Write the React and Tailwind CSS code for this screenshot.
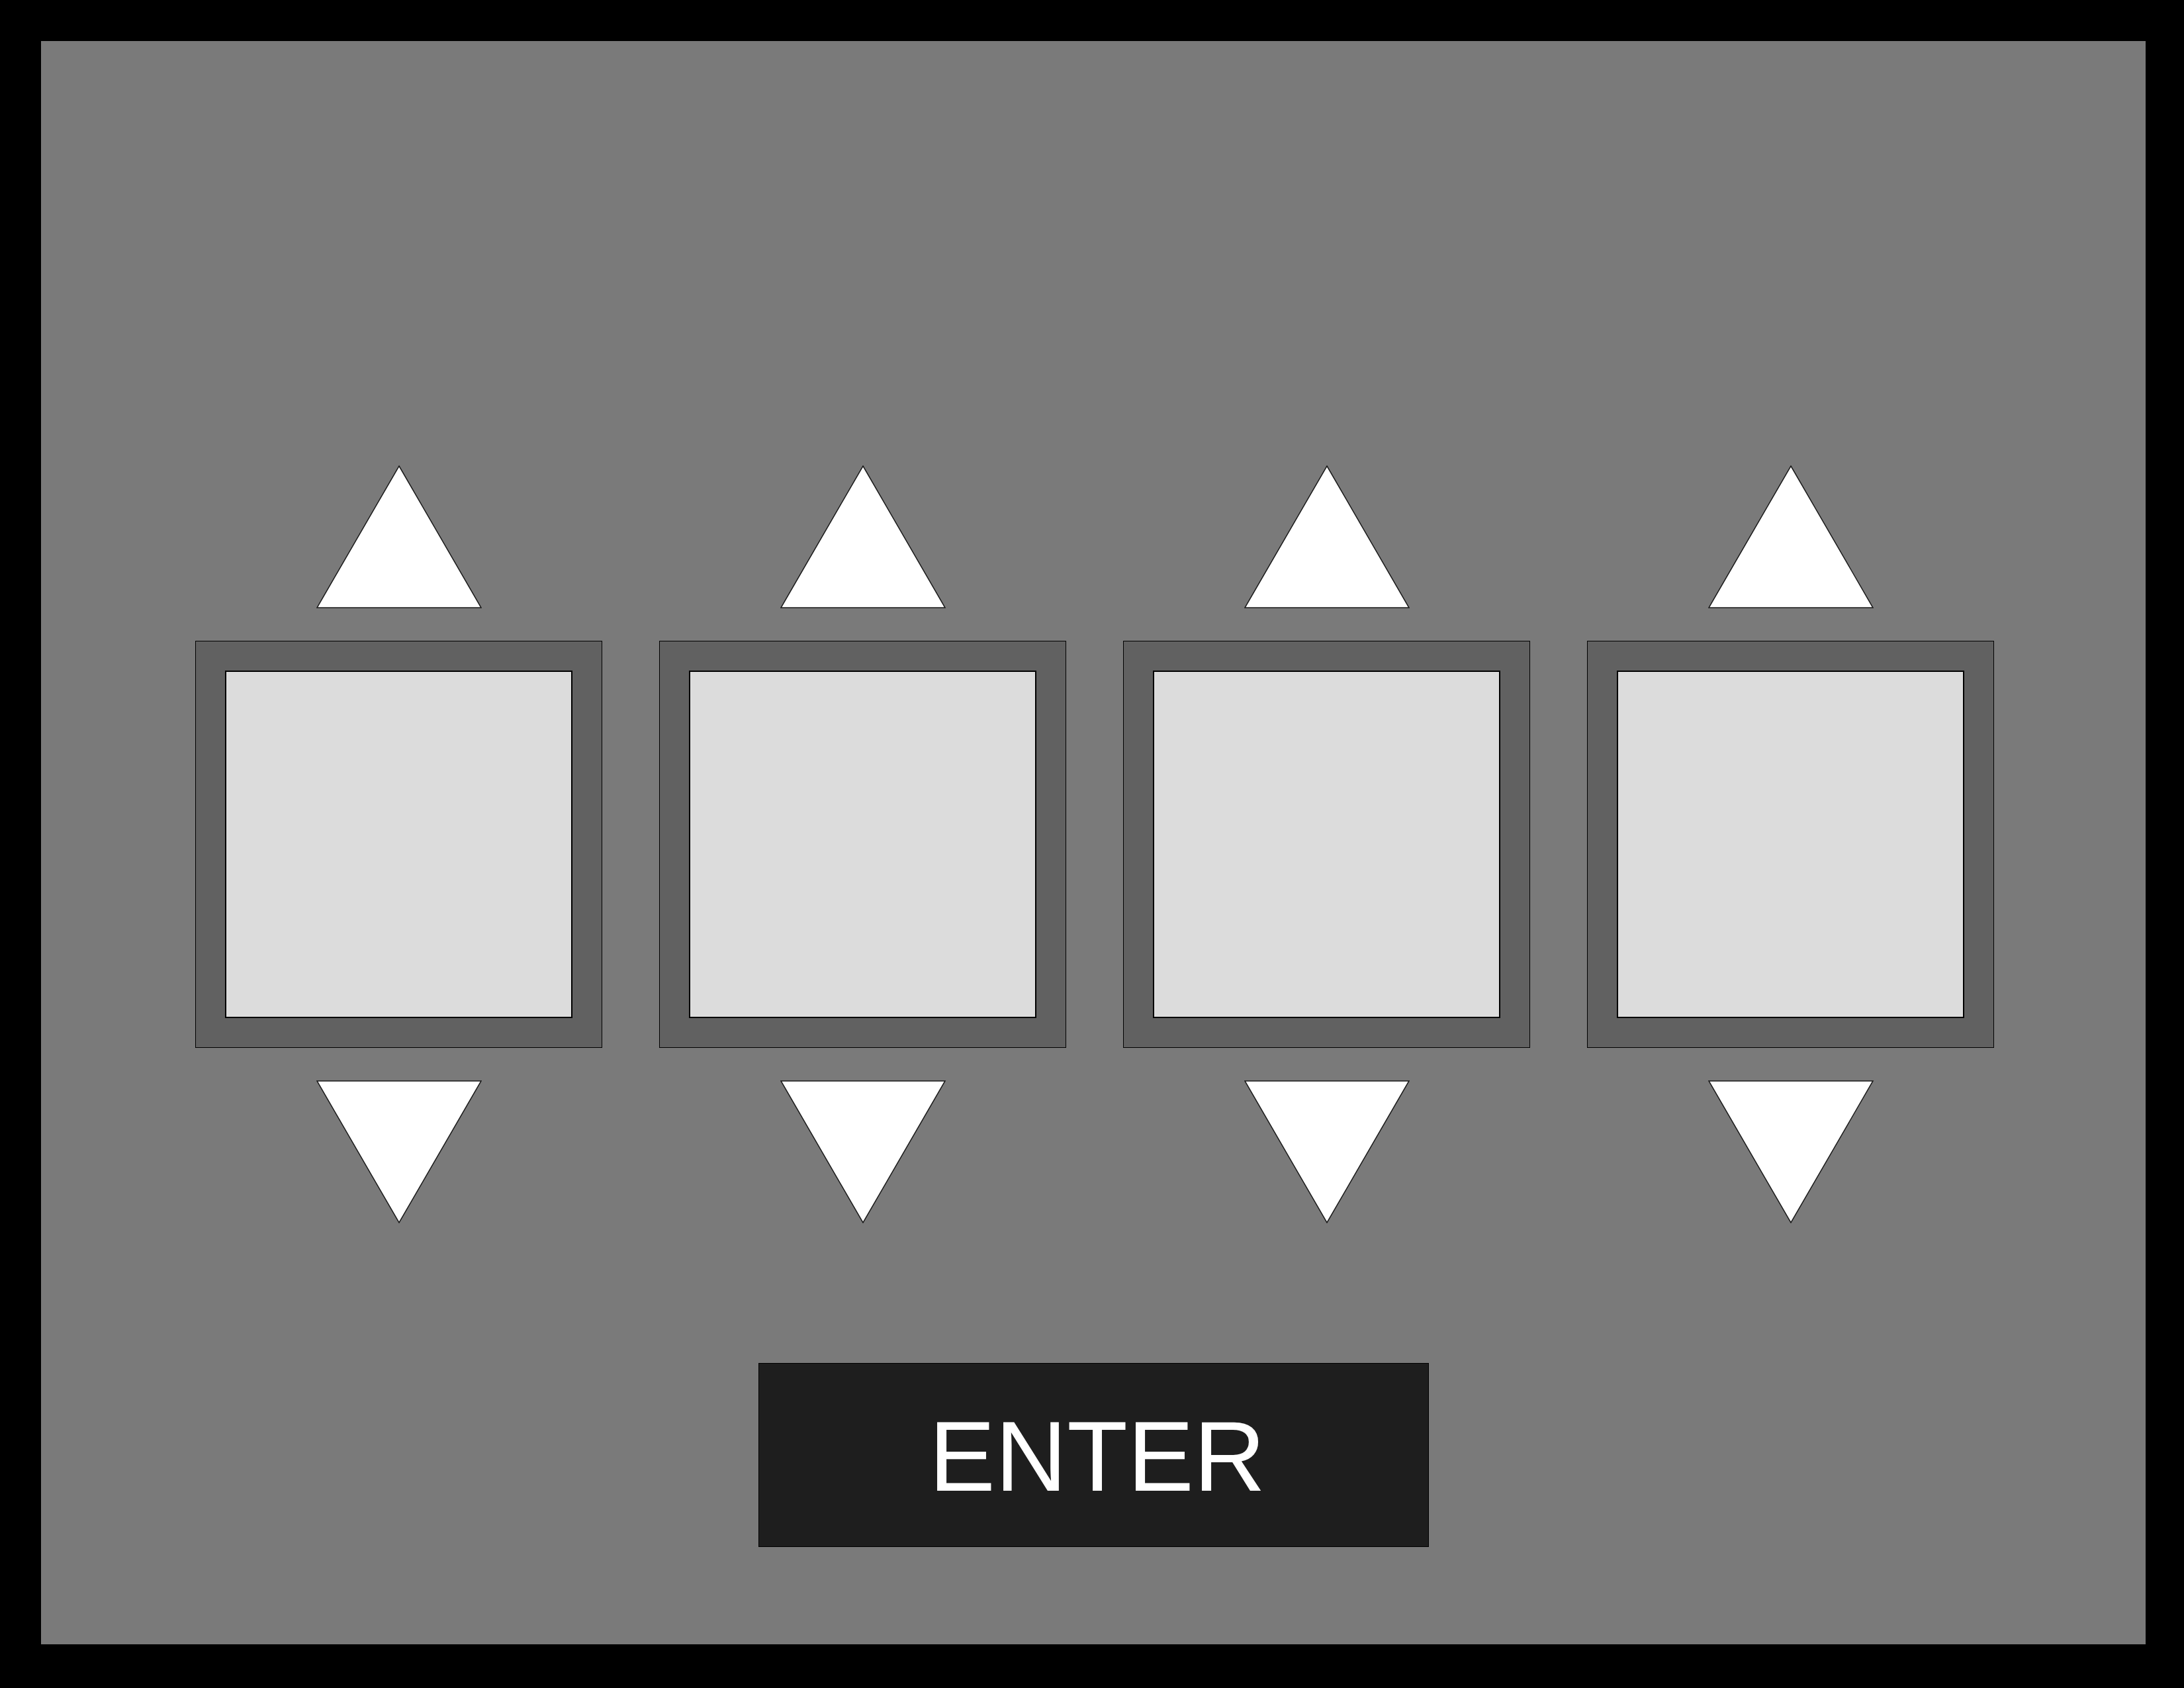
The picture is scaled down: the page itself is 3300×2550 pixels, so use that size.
import React from "react";

function Up() {
  return (
    <svg width="250" height="216" viewBox="-1 -1 250 216" className="block">
      <polygon points="124,0 248,214 0,214" fill="#ffffff" stroke="#1a1a1a" strokeWidth="1.5" strokeLinejoin="miter" />
    </svg>
  );
}

function Down() {
  return (
    <svg width="250" height="216" viewBox="-1 -1 250 216" className="block">
      <polygon points="0,0 248,0 124,214" fill="#ffffff" stroke="#1a1a1a" strokeWidth="1.5" strokeLinejoin="miter" />
    </svg>
  );
}

function Column() {
  return (
    <div className="flex flex-col items-center">
      <Up />
      <div className="mt-[49px] mb-[49px] w-[615px] h-[615px] bg-[#616161] border border-black p-[44px]">
        <div className="w-full h-full bg-[#dcdcdc] border-2 border-black" />
      </div>
      <Down />
    </div>
  );
}

export default function App() {
  return (
    <div className="w-[3300px] h-[2550px] bg-black pt-[62px] pl-[62px]">
      <div className="w-[3180px] h-[2422px] bg-[#7a7a7a] flex flex-col items-center pt-[641px]">
        <div className="flex flex-row gap-[86px] ml-[4px]">
          <Column />
          <Column />
          <Column />
          <Column />
        </div>
        <div className="mt-[211px] w-[1013px] h-[278px] bg-[#1e1e1e] border border-black flex items-center justify-center">
          <span
            className="text-white text-[150px] leading-none pl-[12px] pt-[4px]"
            style={{ fontFamily: '"Liberation Sans", Arial, sans-serif' }}
          >
            ENTER
          </span>
        </div>
      </div>
    </div>
  );
}
